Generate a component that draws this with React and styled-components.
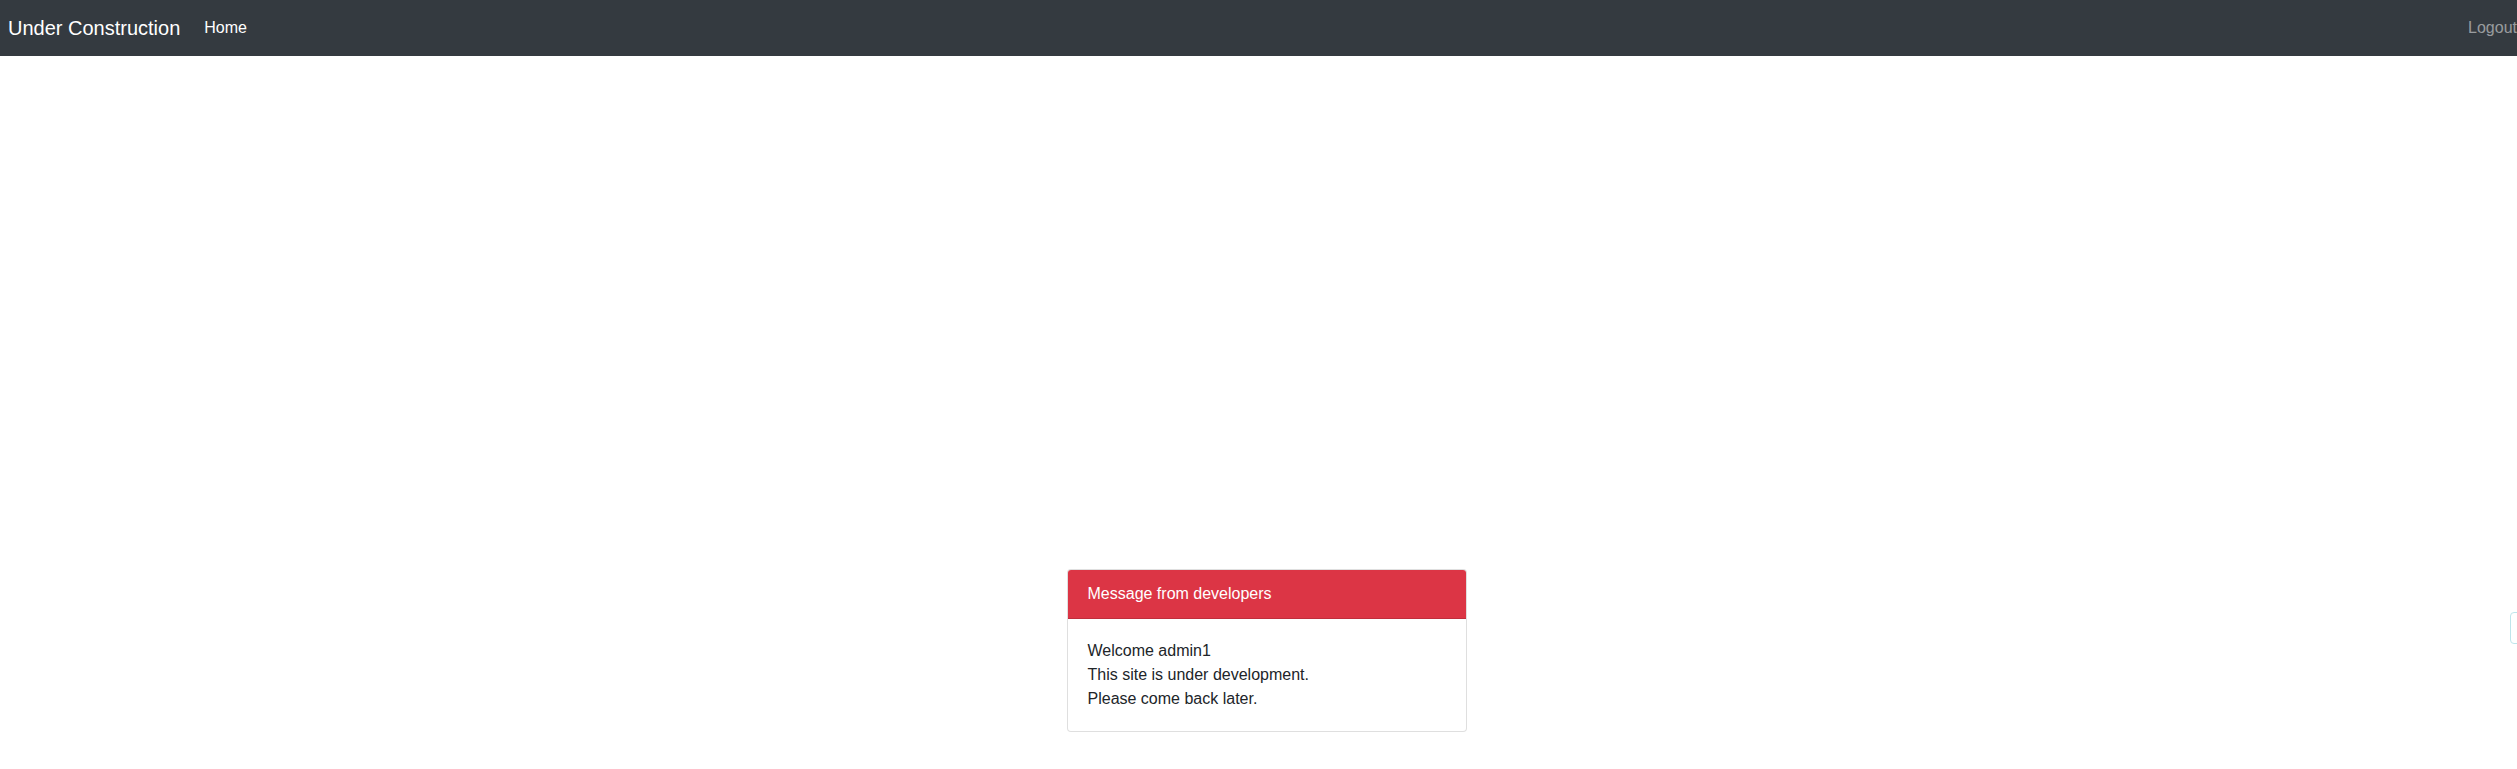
import React from "react";
import styled, { createGlobalStyle } from "styled-components";

const GlobalStyle = createGlobalStyle`
  html, body {
    margin: 0;
    padding: 0;
    overflow-x: hidden;
    background: #fff;
  }
  body {
    font-family: "Liberation Sans", Arial, Helvetica, sans-serif;
    font-size: 16px;
    line-height: 1.5;
    color: #212529;
  }
  * { box-sizing: border-box; }
`;

const Page = styled.div`
  position: relative;
  width: 2533px;
  min-height: 769px;
`;

const Navbar = styled.nav`
  display: flex;
  align-items: center;
  height: 56px;
  padding: 8px;
  background: #343a40;
`;

const Brand = styled.a`
  font-size: 20px;
  line-height: 30px;
  padding: 5px 0;
  margin-right: 16px;
  color: #fff;
  text-decoration: none;
  white-space: nowrap;
`;

const NavList = styled.ul`
  display: flex;
  list-style: none;
  margin: 0;
  padding: 0;
  margin-left: ${(p) => (p.$right ? "auto" : "0")};
`;

const NavLink = styled.a`
  display: block;
  padding: 8px;
  font-size: 16px;
  line-height: 24px;
  text-decoration: none;
  color: ${(p) => (p.$active ? "#fff" : "rgba(255,255,255,0.5)")};
`;

const Main = styled.main`
  display: flex;
  justify-content: center;
  padding-top: 513px;
`;

const Card = styled.div`
  width: 400px;
  border: 1px solid rgba(0, 0, 0, 0.125);
  border-radius: 4px;
  background: #fff;
  overflow: hidden;
`;

const CardHeader = styled.div`
  padding: 12px 20px;
  background: #dc3545;
  color: #fff;
  border-bottom: 1px solid rgba(0, 0, 0, 0.125);
  line-height: 24px;
`;

const CardBody = styled.div`
  padding: 20px;
  line-height: 24px;
`;

const SideToast = styled.div`
  position: absolute;
  left: 2510px;
  top: 612px;
  width: 300px;
  height: 32px;
  border: 1px solid #bee5eb;
  border-radius: 4px;
  background: #fff;
`;

export default function App() {
  return (
    <>
      <GlobalStyle />
      <Page>
        <Navbar>
          <Brand href="#">Under Construction</Brand>
          <NavList>
            <li>
              <NavLink href="#" $active>Home</NavLink>
            </li>
          </NavList>
          <NavList $right>
            <li>
              <NavLink href="#">Logout</NavLink>
            </li>
          </NavList>
        </Navbar>
        <Main>
          <Card>
            <CardHeader>Message from developers</CardHeader>
            <CardBody>
              Welcome admin1
              <br />
              This site is under development.
              <br />
              Please come back later.
            </CardBody>
          </Card>
        </Main>
        <SideToast />
      </Page>
    </>
  );
}
